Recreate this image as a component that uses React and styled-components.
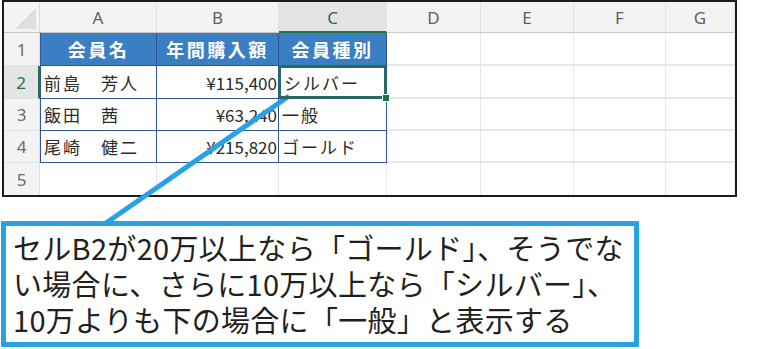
import React from 'react';
import styled, { createGlobalStyle, css } from 'styled-components';

const GlobalStyle = createGlobalStyle`
  html, body {
    margin: 0;
    padding: 0;
    background: #ffffff;
  }
  body {
    font-family: "Noto Sans CJK JP", "Noto Sans", sans-serif;
  }
`;

const GREEN = '#217346';
const BLUE = '#2f5597';
const GRID = '#e8e8e8';
const CALLOUT = '#29a2e4';

const columns = ['A', 'B', 'C', 'D', 'E', 'F', 'G'];
const widths = [36, 117, 122, 108, 94, 93, 92, 69];

const rows = [
  { n: 1, cells: [{ t: '会員名', head: true }, { t: '年間購入額', head: true }, { t: '会員種別', head: true }] },
  { n: 2, cells: [{ t: '前島　芳人' }, { t: '¥115,400', right: true }, { t: 'シルバー', selected: true }] },
  { n: 3, cells: [{ t: '飯田　茜' }, { t: '¥63,240', right: true }, { t: '一般' }] },
  { n: 4, cells: [{ t: '尾崎　健二' }, { t: '¥215,820', right: true }, { t: 'ゴールド' }] },
  { n: 5, cells: [] },
];

const note = [
  'セルB2が20万以上なら「ゴールド」、そうでな',
  'い場合に、さらに10万以上なら「シルバー」、',
  '10万よりも下の場合に「一般」と表示する',
];

export default function App() {
  return (
    <Page>
      <GlobalStyle />
      <Sheet>
        <Corner />
        {columns.map((c) => (
          <ColHead key={c} $active={c === 'C'}>{c}</ColHead>
        ))}
        {rows.map((r) => (
          <React.Fragment key={r.n}>
            <RowHead $active={r.n === 2} $last={r.n === 5}>{r.n}</RowHead>
            {columns.map((c, i) => {
              const cell = r.cells[i];
              if (!cell) return <Cell key={c} $last={r.n === 5} />;
              return (
                <Cell
                  key={c}
                  $table
                  $first={i === 0}
                  $head={cell.head}
                  $right={cell.right}
                  $selected={cell.selected}
                >
                  {cell.t}
                  {cell.selected && <FillHandle />}
                </Cell>
              );
            })}
          </React.Fragment>
        ))}
      </Sheet>

      <Callout>
        {note.map((line) => (
          <NoteLine key={line}>{line}</NoteLine>
        ))}
      </Callout>

      <Connector viewBox="0 0 783 349" width="783" height="349">
        <line x1="289" y1="96" x2="106" y2="223" stroke={CALLOUT} strokeWidth="5" />
      </Connector>
    </Page>
  );
}

const Page = styled.div`
  position: relative;
  width: 783px;
  height: 349px;
  overflow: hidden;
`;

const Sheet = styled.div`
  display: grid;
  grid-template-columns: ${widths.map((w) => `${w}px`).join(' ')};
  grid-template-rows: 31px 33px 33px 32px 32px 32px;
  width: max-content;
  margin-left: 2px;
  border: 2px solid #1c1c1c;
  overflow: hidden;
  background: #ffffff;
`;

const headBase = css`
  display: flex;
  align-items: center;
  justify-content: center;
  background: #f3f3f3;
  color: #5f5f5f;
  font-family: "Noto Sans", "Liberation Sans", sans-serif;
  font-size: 17px;
  box-sizing: border-box;
`;

const Corner = styled.div`
  ${headBase};
  position: relative;
  border-right: 1px solid #dcdcdc;
  border-bottom: 1px solid #c6c6c6;

  &::after {
    content: '';
    position: absolute;
    right: 3px;
    bottom: 3px;
    width: 21px;
    height: 21px;
    background: #dfdfdf;
    clip-path: polygon(100% 0, 100% 100%, 0 100%);
  }
`;

const ColHead = styled.div`
  ${headBase};
  border-right: 1px solid #e2e2e2;
  border-bottom: ${(p) => (p.$active ? `2px solid ${GREEN}` : '1px solid #c6c6c6')};
  background: ${(p) => (p.$active ? '#e4e4e4' : '#f3f3f3')};
  color: ${(p) => (p.$active ? '#2a6a45' : '#5f5f5f')};
  padding-top: ${(p) => (p.$active ? '1px' : '0')};
`;

const RowHead = styled.div`
  ${headBase};
  border-right: ${(p) => (p.$active ? `2px solid ${GREEN}` : '1px solid #dcdcdc')};
  border-bottom: ${(p) => (p.$last ? 'none' : '1px solid #e2e2e2')};
  background: ${(p) => (p.$active ? '#e4e4e4' : '#f3f3f3')};
  color: ${(p) => (p.$active ? GREEN : '#6a6a6a')};
`;

const Cell = styled.div`
  position: relative;
  display: flex;
  align-items: center;
  box-sizing: border-box;
  padding: 0 3px;
  font-size: 17px;
  letter-spacing: 2px;
  color: #2b2b2b;
  white-space: nowrap;
  border-right: 1px solid ${GRID};
  border-bottom: ${(p) => (p.$last ? 'none' : `2px solid ${GRID}`)};

  ${(p) =>
    p.$table &&
    css`
      border-right: 1px solid ${BLUE};
      border-bottom: 1px solid ${BLUE};
    `}

  ${(p) =>
    p.$first &&
    css`
      border-left: 1px solid ${BLUE};
    `}

  ${(p) =>
    p.$head &&
    css`
      justify-content: center;
      background: #3a7fc4;
      color: #ffffff;
      font-weight: 700;
      font-size: 18px;
      letter-spacing: 2.5px;
    `}

  ${(p) =>
    p.$right &&
    css`
      justify-content: flex-end;
      padding-right: 1px;
      letter-spacing: 0;
    `}

  ${(p) =>
    p.$selected &&
    css`
      box-shadow: inset 0 0 0 2px ${GREEN};
      padding-left: 5px;
      overflow: visible;
      z-index: 1;
    `}
`;

const FillHandle = styled.span`
  position: absolute;
  right: -4px;
  bottom: -4px;
  width: 6px;
  height: 6px;
  background: ${GREEN};
  border: 1px solid #ffffff;
`;

const Callout = styled.div`
  box-sizing: border-box;
  display: flex;
  flex-direction: column;
  width: 638px;
  height: 126px;
  margin: 24px 0 0 1px;
  padding: 3px 0 0 7px;
  border: 5px solid ${CALLOUT};
  border-radius: 1px;
  font-family: "Noto Sans CJK JP", sans-serif;
  font-size: 29px;
  letter-spacing: 0.3px;
  color: #231f20;
  white-space: nowrap;
`;

const NoteLine = styled.div`
  height: 36px;
  line-height: 36px;
`;

const Connector = styled.svg`
  position: absolute;
  left: 0;
  top: 0;
  pointer-events: none;
`;
